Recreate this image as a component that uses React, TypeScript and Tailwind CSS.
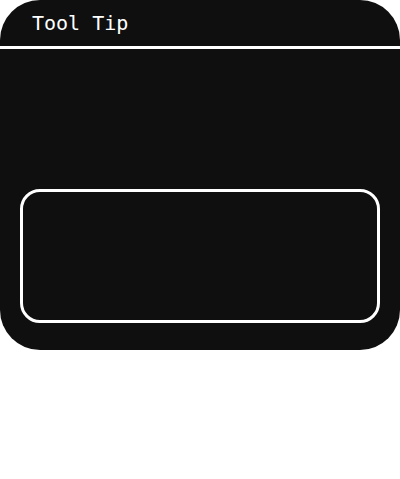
export default function App() {
    return (
        <div className="w-[400px] h-[479px] bg-white">
            <div className="h-[350px] bg-[#0f0f0f] rounded-[40px] flex flex-col overflow-hidden">
                {/* Header */}
                <div className="h-[46px] flex items-center px-8 border-b-[3px] border-white box-content">
                    <span className="text-white text-[20px] leading-none font-['DejaVu_Sans_Mono',monospace]">
                        Tool Tip
                    </span>
                </div>

                {/* Body */}
                <div className="flex-1 flex flex-col justify-end px-5 pb-[27px]">
                    <div className="h-[134px] border-[3px] border-white rounded-[20px]" />
                </div>
            </div>
        </div>
    );
}
